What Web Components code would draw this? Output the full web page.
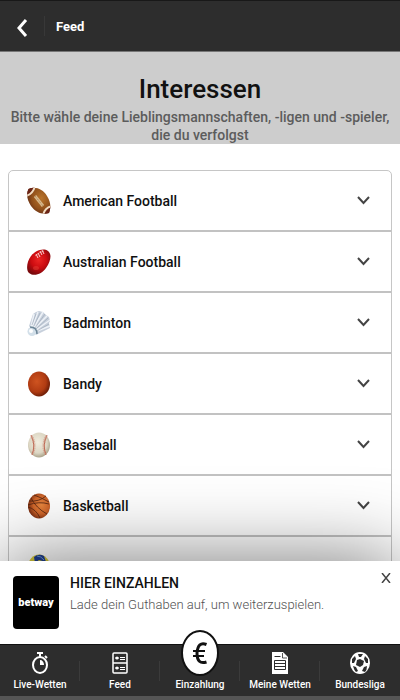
<!DOCTYPE html>
<html lang="de">
<head>
<meta charset="utf-8">
<meta name="viewport" content="width=device-width, initial-scale=1">
<title>Feed – Interessen</title>
<style>
html, body { height: 100%; margin: 0; }
body { font-family: Roboto, "Liberation Sans", sans-serif; color: #111; background: #fff; }
svg { display: block; }
</style>
</head>
<body>
<app-screen>
  <app-header slot="header">Feed</app-header>
  <hero-banner>
    <span slot="title">Interessen</span>
    Bitte wähle deine Lieblingsmannschaften, -ligen und -spieler, die du verfolgst
  </hero-banner>
  <sport-list>
    <sport-row>American Football
      <svg slot="icon" width="24" height="28" viewBox="0 0 24 28">
        <defs><radialGradient id="af" cx=".6" cy=".4" r=".65"><stop offset="0" stop-color="#b8742c"/><stop offset=".6" stop-color="#92511b"/><stop offset="1" stop-color="#5d2712"/></radialGradient>
        <clipPath id="afc"><path d="M1.500 2C8-1 16 2 20 9c4 6 4 12 2 17-6 2-13 0-18-7C0 13-1 7 1.500 2z"/></clipPath></defs>
        <g clip-path="url(#afc)"><path fill="url(#af)" d="M0 0h24v28H0z"/><path fill="#6b2316" d="M0 0h8L0 9zM24 19v9h-8z"/><path d="M-1 9Q6 7 8-1M16 29Q17 21 25 19" fill="none" stroke="#f1dcc4" stroke-width="2"/></g>
        <path d="M8 9l8 10" stroke="#d8b98c" stroke-width="3"/><path d="M8 9l8 10" stroke="#a98055" stroke-width="1" stroke-dasharray="1 1"/>
      </svg>
    </sport-row>
    <sport-row>Australian Football
      <svg slot="icon" width="24" height="28" viewBox="0 0 24 28">
        <defs><radialGradient id="au" cx=".5" cy=".4" r=".6"><stop offset="0" stop-color="#ed2523"/><stop offset=".55" stop-color="#cc0b10"/><stop offset="1" stop-color="#79090c"/></radialGradient></defs>
        <path fill="url(#au)" d="M21 3C16-.5 8 3 4 8-.5 14-1 22 2 25c5 4 13 1 17-5 5-7 6-14 2-17z"/>
        <path d="M8 8Q12 4 17 3" fill="none" stroke="#f0a39c" stroke-width=".7"/><path d="M9 6l2 4M11 5l2 4M13 3l2 4M15 2l2 4" stroke="#fff" stroke-width=".8"/>
        <ellipse cx="9" cy="20" rx="3" ry="2" fill="#f45345" opacity=".35"/>
      </svg>
    </sport-row>
    <sport-row>Badminton
      <svg slot="icon" width="24" height="28" viewBox="0 0 24 28">
        <path fill="#c7d0dc" d="M2 17L6 5l3-2 3-1 4 1 3 3 3 2 1 4-1 2 1 5-14 7z"/>
        <path d="M4 18L7 5M5 18L11 3M7 18L16 3M8 19L20 7M9 21L23 11M10 22L23 17" stroke="#eef2f7" stroke-width="1.500"/>
        <path d="M5 16L9 5M7 17L13 4M8 19L18 5M9 20L21 9M10 22L22 15" fill="none" stroke="#9aa6b5" stroke-width=".6"/>
        <circle cx="5" cy="22.500" r="4.500" fill="#d2dfe9"/><path d="M3 18q7 0 7 7" fill="none" stroke="#6e8798" stroke-width="1.500"/><circle cx="4" cy="22" r="2" fill="#fff"/>
      </svg>
    </sport-row>
    <sport-row>Bandy
      <svg slot="icon" width="24" height="28" viewBox="0 0 24 28">
        <defs><radialGradient id="ba" cx=".4" cy=".4" r=".6"><stop offset="0" stop-color="#cf5420"/><stop offset=".7" stop-color="#b03b12"/><stop offset="1" stop-color="#742108"/></radialGradient></defs>
        <ellipse cx="12" cy="14" rx="11" ry="12.500" fill="url(#ba)"/>
      </svg>
    </sport-row>
    <sport-row>Baseball
      <svg slot="icon" width="24" height="28" viewBox="0 0 24 28">
        <defs><radialGradient id="bb" cx=".45" cy=".4" r=".6"><stop offset="0" stop-color="#f2eee0"/><stop offset=".7" stop-color="#dcd6c3"/><stop offset="1" stop-color="#aaa38b"/></radialGradient></defs>
        <ellipse cx="12" cy="14" rx="11" ry="12.500" fill="url(#bb)"/>
        <path d="M4 4q5 10 1 20M20 4q-5 10-1 20" fill="none" stroke="#b5604a" stroke-width="1"/><path d="M4.500 5q5 9 1 18M19.500 5q-5 9-1 18" fill="none" stroke="#cf8a75" stroke-width="2.500" stroke-dasharray="1 1" opacity=".8"/>
      </svg>
    </sport-row>
    <sport-row>Basketball
      <svg slot="icon" width="24" height="28" viewBox="0 0 24 28">
        <defs><radialGradient id="bk" cx=".6" cy=".45" r=".6"><stop offset="0" stop-color="#e8873f"/><stop offset=".6" stop-color="#cd6429"/><stop offset="1" stop-color="#7c2e10"/></radialGradient></defs>
        <ellipse cx="12" cy="14" rx="11" ry="12.500" fill="url(#bk)"/>
        <path d="M2 9q10 1 17-5M1 13q11-4 21-1M4 6q5 10 16 16M7 3q6 2 15 7M1 15q8 2 12 11" fill="none" stroke="#50220f" stroke-width=".8"/>
      </svg>
    </sport-row>
    <sport-row>Beachvolleyball
      <svg slot="icon" width="24" height="28" viewBox="0 0 24 28">
        <ellipse cx="12" cy="14" rx="11" ry="12.500" fill="#d8cb3d"/><path fill="#1f3f94" d="M7 4q5-4 10-1l2 6-7-2-4 3z"/><path d="M10 3q4 0 7 4" fill="none" stroke="#6f9ad5" stroke-width="1"/>
      </svg>
    </sport-row>
  </sport-list>
  <promo-bar slot="footer" brand="betway">
    <span slot="title">HIER EINZAHLEN</span>
    Lade dein Guthaben auf, um weiterzuspielen.
  </promo-bar>
  <tab-bar slot="footer">
    <nav-tab>Live-Wetten
      <svg slot="icon" width="16" height="22" viewBox="0 0 16 22" fill="none" stroke="#fff">
        <path stroke-width="2" d="M5 1h6M8 1v4M13 4l2 2"/><ellipse cx="8" cy="13" rx="7" ry="8" stroke-width="2"/><path d="M8 13V8a4 5 0 0 1 4 5z" fill="#fff" stroke="none"/>
      </svg>
    </nav-tab>
    <nav-tab>Feed
      <svg slot="icon" width="16" height="22" viewBox="0 0 16 22" fill="none" stroke="#fff">
        <rect x="1" y="1" width="14" height="20" rx="1" stroke-width="1.500"/><path d="M1 11h14" stroke-width="1.500"/><circle cx="5" cy="6" r="1.500" fill="#fff" stroke="none"/><circle cx="5" cy="16" r="1.500" fill="#fff" stroke="none"/><path d="M8 5.500h5M8 7.500h5M8 15.500h5M8 17.500h5M3 6h4M3 16h4"/>
      </svg>
    </nav-tab>
    <nav-tab raised>Einzahlung
      <svg slot="icon" width="38" height="46" viewBox="0 0 38 46">
        <ellipse cx="19" cy="23" rx="18" ry="22" fill="#fff" stroke="#111" stroke-width="2"/>
        <path d="M25.500 14.500Q17 11 16 23Q16 35 25.500 32" fill="none" stroke="#111" stroke-width="3"/><path d="M12 21h12M12 26h11" stroke="#111" stroke-width="2"/>
      </svg>
    </nav-tab>
    <nav-tab>Meine Wetten
      <svg slot="icon" width="16" height="22" viewBox="0 0 16 22">
        <path fill="#fff" d="M0 0h11l5 5v17H0z"/><path fill="none" stroke="#2d2d2d" d="M2.500 4.500h6M2.500 8.500h11v9h-11zM2.500 11.500h11M2.500 14.500h11"/><path d="M10.500 1v5H15" fill="none" stroke="#2d2d2d" stroke-width=".8"/>
      </svg>
    </nav-tab>
    <nav-tab>Bundesliga
      <svg slot="icon" width="20" height="22" viewBox="0 0 20 22">
        <ellipse cx="10" cy="11" rx="9" ry="10" fill="#fff" stroke="#fff" stroke-width="2"/>
        <path fill="#2d2d2d" d="M8 2h5l-2 3H9zM7 8l3-1 4 2-1 4-3 2-4-2zM2 7l3-3 1 3-2 4H2zM18 7l-3-3-1 3 2 4h2zM3 14l3 1 2 4-2 1q-2-2-3-6zM17 14l-3 1-2 4 3 1q2-2 2-6z"/>
      </svg>
    </nav-tab>
  </tab-bar>
</app-screen>

<script>
const define = (name, html, setup) => {
  const template = document.createElement('template');
  template.innerHTML = html;
  customElements.define(name, class extends HTMLElement {
    constructor() {
      super();
      this.attachShadow({ mode: 'open' }).append(template.content.cloneNode(true));
    }
    connectedCallback() { if (setup) setup(this, this.shadowRoot); }
  });
};

define('app-screen', `
  <style>
    :host { display: flex; flex-direction: column; height: 100vh; }
    main { flex: 1; min-height: 0; overflow: hidden; }
    footer { position: relative; z-index: 1; box-shadow: 0 0 80px rgba(0, 0, 0, .54); border-bottom: 4px solid #555; }
  </style>
  <slot name="header"></slot><main><slot></slot></main><footer><slot name="footer"></slot></footer>`);

define('app-header', `
  <style>
    :host { display: block; }
    header { display: flex; align-items: center; height: 50px; background: #2d2d2d; border-top: 1px solid #181818; border-bottom: 1px solid #777; color: #fff; }
    button { display: grid; place-items: center; width: 44px; height: 50px; padding: 4px 0 0; border: 0; background: none; color: inherit; }
    h2 { margin: 2px 0 0; padding-left: 11px; font-size: 13px; font-weight: 700; line-height: 20px; }
    i { width: 1px; height: 20px; background: #383838; }
  </style>
  <header><button type="button" aria-label="Zurück"><svg width="12" height="18" viewBox="0 0 12 18" fill="none" stroke="currentColor" stroke-width="3"><path d="M10 1L3 9l7 8"/></svg></button><i></i><h2><slot></slot></h2></header>`);

define('hero-banner', `
  <style>
    :host { display: block; padding: 19px 4px 0; background: #cdcdcd; text-align: center; }
    h1 { margin: 0 0 1px; font-size: 26px; font-weight: 500; line-height: 36px; }
    p { margin: 0; color: #5c5c5c; font-size: 14px; font-weight: 500; line-height: 18px; }
  </style>
  <h1><slot name="title"></slot></h1><p><slot></slot></p>`);

define('sport-list', `
  <style>
    :host { display: block; margin: 26px 8px 0; border: 1px solid #c6c6c6; border-radius: 5px; }
  </style>
  <slot></slot>`);

define('sport-row', `
  <style>
    :host { display: block; border-bottom: 2px solid #c2c2c2; }
    button { display: flex; align-items: center; gap: 12px; width: 100%; height: 59px; padding: 0 21px 0 18px; border: 0; background: none; color: #111; font: 500 14px Roboto, "Liberation Sans", sans-serif; text-align: left; }
    span { flex: 1; }
    svg { display: block; }
  </style>
  <button type="button" aria-expanded="false"><slot name="icon"></slot><span><slot></slot></span>
    <svg width="13" height="9" viewBox="0 0 13 9" fill="none" stroke="#444" stroke-width="2"><path d="M1 1l5.500 6L12 1"/></svg></button>`);

define('promo-bar', `
  <style>
    :host { display: block; background: #fff; border-bottom: 1px solid #111; }
    section { display: flex; gap: 11px; padding: 15px 7px 15px 13px; }
    .logo { display: grid; place-items: center; width: 46px; height: 53px; border-radius: 4px; background: #000; color: #fff; font-size: 11px; font-weight: 900; }
    .copy { flex: 1; }
    h3 { margin: 0; font-size: 14px; font-weight: 500; line-height: 14px; }
    p { margin: 5px 0 0; color: #505050; font-size: 13px; font-weight: 300; line-height: 20px; }
    button { align-self: flex-start; width: 14px; padding: 0; border: 0; margin-top: -5px; background: none; }
  </style>
  <section><div class="logo"></div><div class="copy"><h3><slot name="title"></slot></h3><p><slot></slot></p></div>
  <button type="button" aria-label="Schließen"><svg width="10" height="10" viewBox="0 0 10 10" stroke="#444" stroke-width="1.500"><path d="M1 0l8 10M9 0L1 10"/></svg></button></section>`,
  (host, root) => { root.querySelector('.logo').textContent = host.getAttribute('brand'); });

define('tab-bar', `
  <style>
    :host { display: block; background: #2d2d2d; }
    nav { display: grid; grid-template-columns: repeat(5, 1fr); height: 51px; }
  </style>
  <nav><slot></slot></nav>`);

define('nav-tab', `
  <style>
    :host { display: block; background: linear-gradient(#3b3b3b, #3b3b3b) right center / 1px 20px no-repeat; }
    :host(:last-child) { background: none; }
    a { display: flex; flex-direction: column; align-items: center; justify-content: flex-end; gap: 4px; height: 47px; color: #fff; font: 500 10px/14px Roboto, "Liberation Sans", sans-serif; text-decoration: none; white-space: nowrap; }
    :host([raised]) a { gap: 2px; }
    ::slotted(svg) { flex: none; }
  </style>
  <a href="#"><slot name="icon"></slot><span><slot></slot></span></a>`);
</script>
</body>
</html>
